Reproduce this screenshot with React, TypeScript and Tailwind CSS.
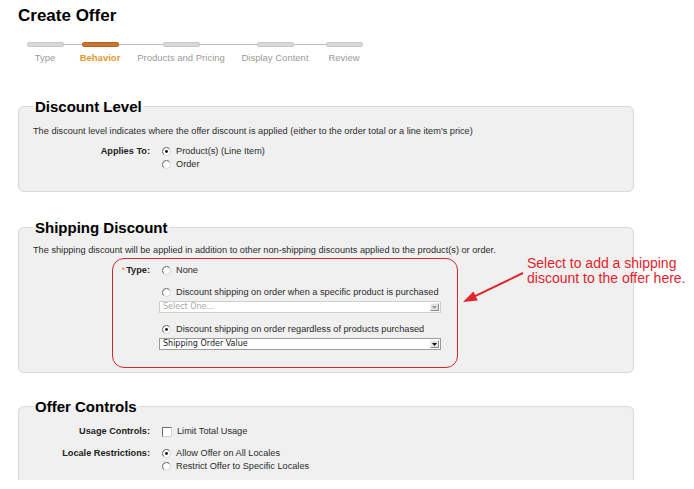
import React from "react";

const steps = [
  { label: "Type", cls: "ml-[25px] w-[40px]", active: false },
  { label: "Behavior", cls: "ml-[15px] w-[40px]", active: true },
  { label: "Products and Pricing", cls: "ml-[14px] w-[94px]", active: false },
  { label: "Display Content", cls: "ml-[12px] w-[70px]", active: false },
  { label: "Review", cls: "ml-[14px] w-[40px]", active: false },
];

const Radio = ({ checked = false }: { checked?: boolean }) => (
  <svg width="9" height="9" viewBox="0 0 9 9" className="shrink-0">
    <circle cx="4.5" cy="4.5" r="4" fill="#fff" stroke="#d6d6d6" />
    <path d="M1.6 7.4 A4 4 0 0 1 7.4 1.6" fill="none" stroke="#6a6a6a" />
    {checked && <circle cx="4.5" cy="4.5" r="1.4" fill="#111" />}
  </svg>
);

const RadioRow = ({ label, checked, className = "" }: { label: string; checked?: boolean; className?: string }) => (
  <div className={`flex items-center h-[13px] ml-[3px] gap-[5px] ${className}`}>
    <Radio checked={checked} />
    <span className="leading-[13px] whitespace-nowrap">{label}</span>
  </div>
);

const Select = ({ value, disabled = false, className = "" }: { value: string; disabled?: boolean; className?: string }) => (
  <div
    className={`flex items-center h-[12px] w-[282px] bg-white border ${
      disabled ? "border-[#cfcfcf]" : "border-[#9c9c9c]"
    } ${className}`}
  >
    <span
      className={`flex-1 pl-[3px] font-['DejaVu_Sans',Verdana,sans-serif] text-[8px] leading-[10px] whitespace-nowrap ${
        disabled ? "text-[#a8a8a8]" : "text-[#222]"
      }`}
    >
      {value}
    </span>
    <span className="mr-[1px] flex items-center justify-center w-[9px] h-[8px] bg-[#e4e3e0] border border-t-[#f4f4f4] border-l-[#f4f4f4] border-r-[#8a8a8a] border-b-[#8a8a8a]">
      <svg width="5" height="3" viewBox="0 0 5 3">
        <path d="M0 0 H5 L2.5 3 Z" fill={disabled ? "#999" : "#111"} />
      </svg>
    </span>
  </div>
);

const Legend = ({ children }: { children: React.ReactNode }) => (
  <legend className="px-[2px] text-[15px] leading-[17px] font-bold text-black">{children}</legend>
);

export default function App() {
  return (
    <div className="relative w-[694px] h-[489px] overflow-hidden bg-white font-['Liberation_Sans',Arial,sans-serif] text-[9.2px] text-[#2b2b2b]">
      <h1 className="pl-[18px] pt-[6px] text-[17px] leading-[20px] font-bold text-black">Create Offer</h1>

      {/* progress steps */}
      <div className="relative mt-[16px]">
        <div className="absolute left-[27px] top-[2px] w-[336px] h-px bg-[#bdbdbd]" />
        <div className="relative flex">
          {steps.map((s) => (
            <div key={s.label} className={`${s.cls} flex flex-col items-center`}>
              <div
                className={`w-[37px] h-[5px] rounded-[2px] border ${
                  s.active ? "bg-[#c9742f] border-[#b8641f]" : "bg-[#d9d9d9] border-[#c8c8c8]"
                }`}
              />
              <span
                className={`mt-[6px] text-[9.5px] leading-[10px] whitespace-nowrap ${
                  s.active ? "text-[#e39a30] font-bold" : "text-[#9a9a9a]"
                }`}
              >
                {s.label}
              </span>
            </div>
          ))}
        </div>
      </div>

      {/* Discount Level */}
      <fieldset className="ml-[18px] mt-[35px] w-[616px] border border-[#d9d9d9] rounded-[6px] bg-[#f0f0f0] pl-[14px] pt-[10px] pb-[20px]">
        <Legend>Discount Level</Legend>
        <p className="leading-[12px]">
          The discount level indicates where the offer discount is applied (either to the order total or a line item's price)
        </p>
        <div className="mt-[8px] grid grid-cols-[117px_1fr] gap-x-[9px]">
          <div className="text-right font-bold leading-[13px] text-[#222]">Applies To:</div>
          <div>
            <RadioRow checked label="Product(s) (Line Item)" />
            <RadioRow label="Order" />
          </div>
        </div>
      </fieldset>

      {/* Shipping Discount */}
      <fieldset className="ml-[18px] mt-[27px] w-[616px] border border-[#d9d9d9] rounded-[6px] bg-[#f0f0f0] pl-[14px] pt-[8px] pb-[22px]">
        <Legend>Shipping Discount</Legend>
        <p className="leading-[12px]">
          The shipping discount will be applied in addition to other non-shipping discounts applied to the product(s) or order.
        </p>
        <div className="mt-[8px] grid grid-cols-[117px_1fr] gap-x-[9px]">
          <div className="text-right font-bold leading-[13px] text-[#222]">
            <span className="text-[#ee8a2a] font-normal mr-[1px]">*</span>Type:
          </div>
          <div>
            <RadioRow label="None" />
            <RadioRow className="mt-[9px]" label="Discount shipping on order when a specific product is purchased" />
            <Select className="mt-[2px]" disabled value="Select One..." />
            <RadioRow className="mt-[10px]" checked label="Discount shipping on order regardless of products purchased" />
            <Select className="mt-[2px]" value="Shipping Order Value" />
          </div>
        </div>
      </fieldset>

      {/* Offer Controls */}
      <fieldset className="ml-[18px] mt-[25px] w-[616px] border border-b-0 border-[#d9d9d9] rounded-t-[6px] bg-[#f0f0f0] pl-[14px] pt-[10px] pb-[7px]">
        <Legend>Offer Controls</Legend>
        <div className="grid grid-cols-[117px_1fr] gap-x-[9px] gap-y-[9px]">
          <div className="text-right font-bold leading-[13px] text-[#222]">Usage Controls:</div>
          <div className="flex items-center h-[13px] ml-[3px] gap-[5px]">
            <span className="w-[10px] h-[10px] bg-white border border-t-[#707070] border-l-[#707070] border-r-[#d0d0d0] border-b-[#d0d0d0]" />
            <span className="leading-[13px]">Limit Total Usage</span>
          </div>
          <div className="text-right font-bold leading-[13px] text-[#222]">Locale Restrictions:</div>
          <div>
            <RadioRow checked label="Allow Offer on All Locales" />
            <RadioRow label="Restrict Offer to Specific Locales" />
          </div>
        </div>
      </fieldset>

      {/* annotation */}
      <div className="absolute left-[112px] top-[258px] w-[346px] h-[110px] rounded-[12px] border-[1.5px] border-[#d3272e]" />
      <svg className="absolute left-[460px] top-[268px]" width="66" height="38" viewBox="0 0 66 38">
        <line x1="63" y1="5" x2="15" y2="28.2" stroke="#e0262d" strokeWidth="2" />
        <polygon points="3,34 17.8,32.4 13.4,23.4" fill="#e0262d" />
      </svg>
      <div className="absolute left-[527px] top-[256px] text-[14px] leading-[15px] text-[#e1232b] whitespace-nowrap">
        Select to add a shipping
        <br />
        discount to the offer here.
      </div>
    </div>
  );
}
